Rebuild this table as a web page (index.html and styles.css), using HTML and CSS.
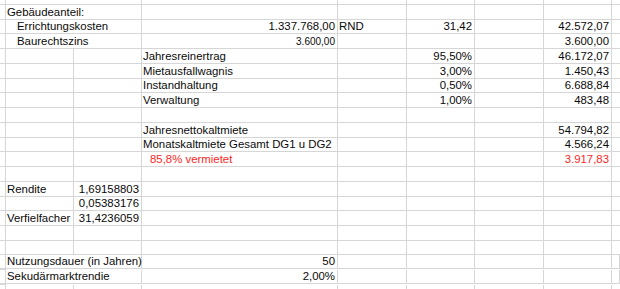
FILE: index.html
```html
<!DOCTYPE html>
<html lang="de">
<head>
<meta charset="utf-8">
<title>Gebäudeanteil</title>
<link rel="stylesheet" href="styles.css">
</head>
<body>
<div class="sheet">
  <div class="row top"><div class="c"></div><div class="c ab"></div><div class="c"></div><div class="c"></div><div class="c"></div><div class="c"></div><div class="c"></div><div class="c h"></div></div>
  <div class="row"><div class="c"></div><div class="c ab">Gebäudeanteil:</div><div class="c"></div><div class="c"></div><div class="c"></div><div class="c"></div><div class="c"></div><div class="c h"></div></div>
  <div class="row"><div class="c"></div><div class="c ab ind">Errichtungskosten</div><div class="c num">1.337.768,00</div><div class="c">RND</div><div class="c num">31,42</div><div class="c"></div><div class="c num">42.572,07</div><div class="c h"></div></div>
  <div class="row"><div class="c"></div><div class="c ab ind">Baurechtszins</div><div class="c num small">3.600,00</div><div class="c"></div><div class="c"></div><div class="c"></div><div class="c num">3.600,00</div><div class="c h"></div></div>
  <div class="row"><div class="c"></div><div class="c"></div><div class="c"></div><div class="c">Jahresreinertrag</div><div class="c"></div><div class="c num">95,50%</div><div class="c"></div><div class="c num">46.172,07</div><div class="c h"></div></div>
  <div class="row"><div class="c"></div><div class="c"></div><div class="c"></div><div class="c">Mietausfallwagnis</div><div class="c"></div><div class="c num">3,00%</div><div class="c"></div><div class="c num">1.450,43</div><div class="c h"></div></div>
  <div class="row"><div class="c"></div><div class="c"></div><div class="c"></div><div class="c">Instandhaltung</div><div class="c"></div><div class="c num">0,50%</div><div class="c"></div><div class="c num">6.688,84</div><div class="c h"></div></div>
  <div class="row"><div class="c"></div><div class="c"></div><div class="c"></div><div class="c">Verwaltung</div><div class="c"></div><div class="c num">1,00%</div><div class="c"></div><div class="c num">483,48</div><div class="c h"></div></div>
  <div class="row"><div class="c"></div><div class="c"></div><div class="c"></div><div class="c"></div><div class="c"></div><div class="c"></div><div class="c"></div><div class="c"></div><div class="c h"></div></div>
  <div class="row"><div class="c"></div><div class="c"></div><div class="c"></div><div class="c">Jahresnettokaltmiete</div><div class="c"></div><div class="c"></div><div class="c"></div><div class="c num">54.794,82</div><div class="c h"></div></div>
  <div class="row"><div class="c"></div><div class="c"></div><div class="c"></div><div class="c">Monatskaltmiete Gesamt DG1 u DG2</div><div class="c"></div><div class="c"></div><div class="c"></div><div class="c num">4.566,24</div><div class="c h"></div></div>
  <div class="row"><div class="c"></div><div class="c"></div><div class="c"></div><div class="c red ind2">85,8% vermietet</div><div class="c"></div><div class="c"></div><div class="c"></div><div class="c num red">3.917,83</div><div class="c h"></div></div>
  <div class="row"><div class="c"></div><div class="c"></div><div class="c"></div><div class="c"></div><div class="c"></div><div class="c"></div><div class="c"></div><div class="c"></div><div class="c h"></div></div>
  <div class="row"><div class="c"></div><div class="c">Rendite</div><div class="c num">1,69158803</div><div class="c"></div><div class="c"></div><div class="c"></div><div class="c"></div><div class="c"></div><div class="c h"></div></div>
  <div class="row"><div class="c"></div><div class="c"></div><div class="c num">0,05383176</div><div class="c"></div><div class="c"></div><div class="c"></div><div class="c"></div><div class="c"></div><div class="c h"></div></div>
  <div class="row"><div class="c"></div><div class="c">Verfielfacher</div><div class="c num">31,4236059</div><div class="c"></div><div class="c"></div><div class="c"></div><div class="c"></div><div class="c"></div><div class="c h"></div></div>
  <div class="row"><div class="c"></div><div class="c"></div><div class="c"></div><div class="c"></div><div class="c"></div><div class="c"></div><div class="c"></div><div class="c"></div><div class="c h"></div></div>
  <div class="row"><div class="c"></div><div class="c"></div><div class="c"></div><div class="c"></div><div class="c"></div><div class="c"></div><div class="c"></div><div class="c"></div><div class="c h"></div></div>
  <div class="row"><div class="c"></div><div class="c ab">Nutzungsdauer (in Jahren)</div><div class="c num">50</div><div class="c"></div><div class="c"></div><div class="c"></div><div class="c"></div><div class="c"></div><div class="c h"></div></div>
  <div class="row"><div class="c"></div><div class="c ab">Sekudärmarktrendie</div><div class="c num">2,00%</div><div class="c"></div><div class="c"></div><div class="c"></div><div class="c"></div><div class="c"></div><div class="c h"></div></div>
  <div class="row"><div class="c"></div><div class="c"></div><div class="c"></div><div class="c"></div><div class="c"></div><div class="c"></div><div class="c"></div><div class="c"></div><div class="c h"></div></div>
</div>
</body>
</html>
```
FILE: styles.css
```css
html, body {
  margin: 0;
  padding: 0;
  background: #ffffff;
}
.sheet {
  width: 620px;
  height: 289px;
  overflow: hidden;
  font-family: "Liberation Sans", Arial, sans-serif;
  font-size: 11.4px;
  color: #0a0a0a;
}
.row {
  display: grid;
  grid-template-columns: 6px 68px 68px 196px 69px 68px 69px 68px 1fr;
  height: 14.737px;
}
.row.top {
  height: 5px;
}
.c {
  box-sizing: border-box;
  border-right: 1px solid #d6d6d6;
  border-bottom: 1px solid #d6d6d6;
  display: flex;
  align-items: flex-end;
  line-height: 13px;
  padding: 0 2px 0 1px;
  white-space: nowrap;
  overflow: visible;
  min-width: 0;
}
.c.h {
  border-right: none;
}
.ab {
  grid-column: span 2;
}
.ind {
  padding-left: 11px;
}
.ind2 {
  padding-left: 8px;
}
.num {
  justify-content: flex-end;
}
.small {
  font-size: 10px;
}
.red {
  color: #ff1f1f;
}
```
